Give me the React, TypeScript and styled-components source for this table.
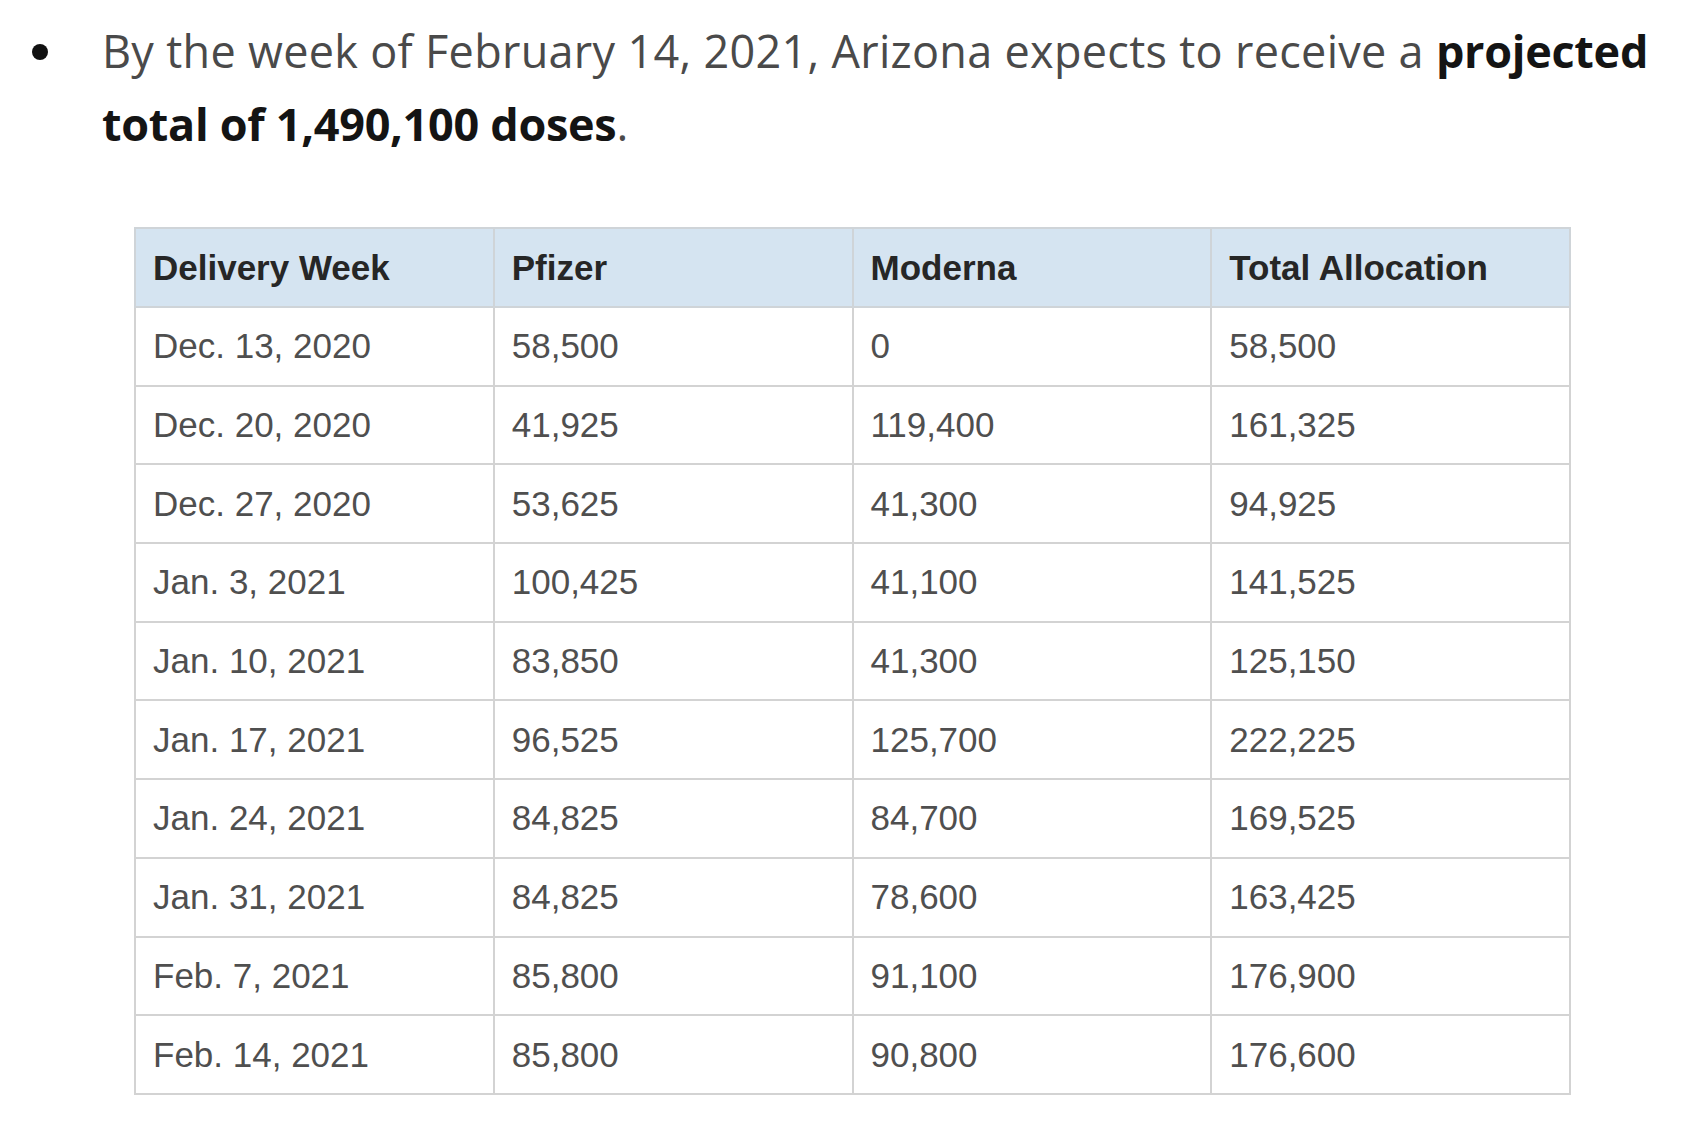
import React from 'react';
import styled, { createGlobalStyle } from 'styled-components';

const GlobalStyle = createGlobalStyle`
  html, body {
    margin: 0;
    padding: 0;
    background: #ffffff;
  }
`;

const Page = styled.main`
  width: 1696px;
  min-height: 1128px;
  padding: 14px 0 0 32px;
  box-sizing: border-box;
  background: #ffffff;
`;

const BulletItem = styled.div`
  display: flex;
  align-items: flex-start;
  gap: 54px;
`;

const Dot = styled.span`
  flex: none;
  width: 16px;
  height: 16px;
  margin-top: 30px;
  border-radius: 50%;
  background: #111111;
`;

const Text = styled.p`
  margin: 0;
  width: 1570px;
  font-family: 'Open Sans', 'Noto Sans', sans-serif;
  font-size: 45px;
  line-height: 73px;
  letter-spacing: 0.3px;
  color: #4a4a4a;

  strong {
    color: #141414;
    font-weight: 700;
    letter-spacing: -0.3px;
  }
`;

const Table = styled.table`
  margin: 67px 0 0 102px;
  width: 1437px;
  border-collapse: collapse;
  table-layout: fixed;
  font-family: 'Liberation Sans', Arial, sans-serif;
  font-size: 35px;
`;

const HeadCell = styled.th`
  height: 77px;
  padding: 0 0 0 17px;
  text-align: left;
  font-weight: 700;
  color: #262626;
  background: #d5e4f1;
  border: 2px solid #cfd4d8;
`;

const Cell = styled.td`
  height: 76.7px;
  padding: 0 0 0 17px;
  color: #4f4f4f;
  border: 2px solid #d3d3d3;
`;

const rows: [string, string, string, string][] = [
  ['Dec. 13, 2020', '58,500', '0', '58,500'],
  ['Dec. 20, 2020', '41,925', '119,400', '161,325'],
  ['Dec. 27, 2020', '53,625', '41,300', '94,925'],
  ['Jan. 3, 2021', '100,425', '41,100', '141,525'],
  ['Jan. 10, 2021', '83,850', '41,300', '125,150'],
  ['Jan. 17, 2021', '96,525', '125,700', '222,225'],
  ['Jan. 24, 2021', '84,825', '84,700', '169,525'],
  ['Jan. 31, 2021', '84,825', '78,600', '163,425'],
  ['Feb. 7, 2021', '85,800', '91,100', '176,900'],
  ['Feb. 14, 2021', '85,800', '90,800', '176,600'],
];

const headers = ['Delivery Week', 'Pfizer', 'Moderna', 'Total Allocation'];

export default function App() {
  return (
    <>
      <GlobalStyle />
      <Page>
        <BulletItem>
          <Dot />
          <Text>
            By the week of February 14, 2021, Arizona expects to receive a{' '}
            <strong>projected total of 1,490,100 doses</strong>.
          </Text>
        </BulletItem>
        <Table>
          <thead>
            <tr>
              {headers.map(h => (
                <HeadCell key={h}>{h}</HeadCell>
              ))}
            </tr>
          </thead>
          <tbody>
            {rows.map(r => (
              <tr key={r[0]}>
                {r.map((v, i) => (
                  <Cell key={i}>{v}</Cell>
                ))}
              </tr>
            ))}
          </tbody>
        </Table>
      </Page>
    </>
  );
}
